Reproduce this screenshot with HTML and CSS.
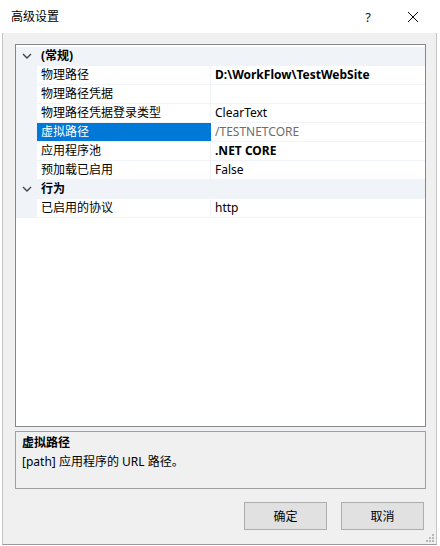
FILE: index.html
```html
<!DOCTYPE html>
<html lang="zh-CN">
<head>
<meta charset="utf-8">
<title>高级设置</title>
<link rel="stylesheet" href="styles.css">
</head>
<body>
<div class="window">
  <div class="titlebar">
    <span class="title">高级设置</span>
    <span class="help">?</span>
    <span class="close">
      <svg width="12" height="12" viewBox="0 0 12 12"><path d="M1 1 L11 11 M11 1 L1 11" stroke="#000" stroke-width="1" fill="none"/></svg>
    </span>
  </div>
  <div class="client">
    <div class="grid">
      <div class="row cat">
        <span class="margin"><svg width="10" height="6" viewBox="0 0 10 6"><path d="M1 1 L5 5 L9 1" stroke="#444" stroke-width="1.4" fill="none"/></svg></span>
        <span class="catname">(常规)</span>
      </div>
      <div class="row"><span class="margin"></span><span class="name">物理路径</span><span class="value bold">D:\WorkFlow\TestWebSite</span></div>
      <div class="row"><span class="margin"></span><span class="name">物理路径凭据</span><span class="value"></span></div>
      <div class="row"><span class="margin"></span><span class="name">物理路径凭据登录类型</span><span class="value">ClearText</span></div>
      <div class="row selected"><span class="margin"></span><span class="name">虚拟路径</span><span class="value readonly">/TESTNETCORE</span></div>
      <div class="row"><span class="margin"></span><span class="name">应用程序池</span><span class="value bold">.NET CORE</span></div>
      <div class="row"><span class="margin"></span><span class="name">预加载已启用</span><span class="value">False</span></div>
      <div class="row cat">
        <span class="margin"><svg width="10" height="6" viewBox="0 0 10 6"><path d="M1 1 L5 5 L9 1" stroke="#444" stroke-width="1.4" fill="none"/></svg></span>
        <span class="catname">行为</span>
      </div>
      <div class="row"><span class="margin"></span><span class="name">已启用的协议</span><span class="value">http</span></div>
    </div>
    <div class="desc">
      <div class="desc-title">虚拟路径</div>
      <div class="desc-text">[path] 应用程序的 URL 路径。</div>
    </div>
    <div class="buttons">
      <button class="btn">确定</button>
      <button class="btn">取消</button>
    </div>
    <svg class="grip" width="8" height="8" viewBox="0 0 8 8">
      <rect x="6" y="0" width="2" height="2" fill="#b8b8b8"/>
      <rect x="3" y="3" width="2" height="2" fill="#b8b8b8"/>
      <rect x="6" y="3" width="2" height="2" fill="#b8b8b8"/>
      <rect x="0" y="6" width="2" height="2" fill="#b8b8b8"/>
      <rect x="3" y="6" width="2" height="2" fill="#b8b8b8"/>
      <rect x="6" y="6" width="2" height="2" fill="#b8b8b8"/>
    </svg>
  </div>
</div>
</body>
</html>
```

FILE: styles.css
```css
* { box-sizing: border-box; }
html, body {
  margin: 0;
  padding: 0;
  background: #ffffff;
}
body {
  width: 440px;
  height: 546px;
  overflow: hidden;
  font-family: "Noto Sans", "Noto Sans CJK SC", sans-serif;
  font-size: 12px;
  color: #000;
}
.window {
  width: 440px;
  display: flex;
  flex-direction: column;
}
.titlebar {
  height: 33px;
  background: #ffffff;
  display: flex;
  align-items: center;
  padding-left: 11px;
}
.title {
  flex: 1;
  font-size: 12px;
  line-height: 16px;
}
.help {
  width: 12px;
  text-align: center;
  font-size: 13px;
  margin-right: 33px;
  color: #111;
}
.close {
  width: 12px;
  height: 12px;
  display: flex;
  margin-right: 21px;
}
.client {
  position: relative;
  margin-left: 2px;
  width: 435px;
  height: 512px;
  background: #f0f0f0;
  border-left: 1px solid #c4c4c4;
  border-right: 1px solid #c4c4c4;
  border-bottom: 1px solid #9a9a9a;
  padding: 11px 10px 0 12px;
  display: flex;
  flex-direction: column;
}
.grid {
  height: 383px;
  background: #ffffff;
  border: 1px solid #828790;
  padding-top: 2px;
}
.row {
  display: grid;
  grid-template-columns: 21px 174px 1fr;
  height: 19px;
  border-bottom: 1px solid #f0f3f8;
  line-height: 18px;
}
.margin {
  background: #f0f3f8;
  display: flex;
  align-items: center;
  justify-content: center;
  padding-left: 1px;
}
.name {
  padding-left: 4px;
  border-right: 1px solid #f0f3f8;
  white-space: nowrap;
}
.value {
  padding-left: 4px;
  white-space: nowrap;
}
.bold { font-weight: 700; }
.readonly { color: #6d6d6d; }
.selected .name {
  background: #0078d7;
  color: #ffffff;
  border-right-color: #0078d7;
}
.cat {
  background: #f0f3f8;
}
.catname {
  grid-column: 2 / 4;
  padding-left: 4px;
  font-weight: 700;
}
.desc {
  margin-top: 4px;
  height: 58px;
  border: 1px solid #a0a0a0;
  background: #f0f0f0;
  padding: 1px 0 0 6px;
  line-height: 19px;
}
.desc-title { font-weight: 700; }
.buttons {
  margin-top: 13px;
  margin-right: 2px;
  display: flex;
  justify-content: flex-end;
  gap: 14px;
}
.btn {
  width: 83px;
  height: 28px;
  background: #e1e1e1;
  border: 1px solid #adadad;
  font-family: "Noto Sans", "Noto Sans CJK SC", sans-serif;
  font-size: 12px;
  color: #000;
  padding: 0;
}
.grip {
  position: absolute;
  right: 2px;
  bottom: 2px;
}
```
